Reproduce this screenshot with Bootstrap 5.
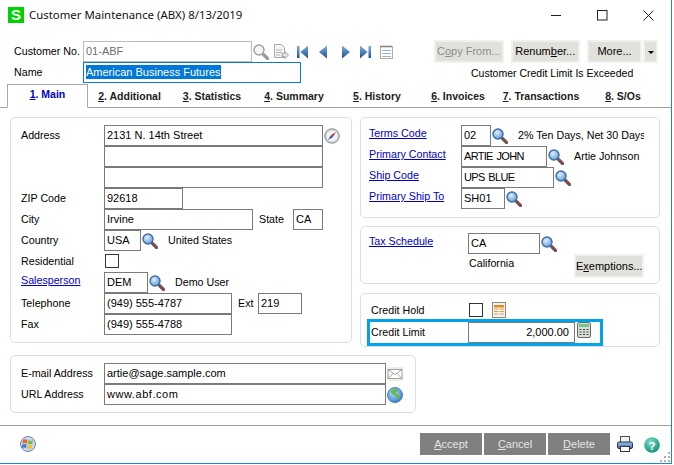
<!DOCTYPE html>
<html lang="en">
<head>
<meta charset="utf-8">
<title>Customer Maintenance</title>
<link href="https://cdn.jsdelivr.net/npm/bootstrap@5.3.0/dist/css/bootstrap.min.css" rel="stylesheet">
<style>
html,body{margin:0;padding:0;background:#fff}
body{font-family:"Liberation Sans",Arial,sans-serif;font-size:10.7px;line-height:1;color:#000;overflow:hidden}
.win{position:relative;width:672px;height:464px;background:#fff;border-right:1px solid #1a84d8;border-bottom:1px solid #1a84d8;overflow:hidden}
.titlebar{height:30px;padding-left:8px}
.sicon{width:16px;height:16px;background:#00d200;color:#fff;font-weight:700;font-size:15px;line-height:16px;text-align:center;margin-top:-1px}
.ttl{font-family:"Noto Sans","Open Sans",sans-serif;font-size:11.4px;margin-left:5px;color:#111}
.wctl{margin-left:auto;width:120px;padding-right:17px}
.hdr{height:54px;padding:10px 0 0 14px}
.hdr-left{width:420px;padding-top:1px}
.hdr-right{width:224px}
.rowf{height:21px}
.lbl-h{width:69px}
.fld{display:block;height:21px;padding:3px 2px 0 2px;border:1px solid #7a7a7a;border-radius:0;background:#fff;font-size:11px;line-height:13px;color:#000;white-space:nowrap;overflow:hidden;box-shadow:none;min-height:0;flex:none}
.fld.dim{border-color:#bdbdbd;color:#6e6e6e}
.fld.sel{border-color:#0f78c8}
.selt{background:#0078d7;color:#fff;padding:1px 0}
.caps{letter-spacing:-.7px;word-spacing:1.5px}
.wide{letter-spacing:.55px}
.w30{width:30px}.w37{width:37px}.w44{width:44px}.w72{width:72px}.w79{width:79px}.w86{width:86px}.w93{width:93px}.w107{width:107px}.w128{width:128px}.w149{width:149px}.w169{width:169px}.w218{width:218px}.w219{width:219px}.w282{width:282px}
.mbtn{height:23px;padding:0;border:2px solid #f0f0ec;border-radius:0;background:#e1e1dc;color:#000;font-size:11px;line-height:19px}
.mbtn.off{color:#8c8c8c;background:#e1e1dc}
.b70{width:70px}.b54{width:55px}.b15{width:15px;margin-left:1px}
.gapr{gap:7px}
.msg{padding:5px 0 0 37px;font-size:10.5px}
.arrow{display:inline-block;width:0;height:0;border-left:3px solid transparent;border-right:3px solid transparent;border-top:3px solid #000;vertical-align:middle}
.tabs{height:24px;padding-left:7px;border-bottom:1px solid #a0a0a0;flex-wrap:nowrap;--bs-nav-tabs-border-width:0}
.tabs .nav-link{height:23px;padding:7px 0 0;border:0;border-radius:0;font-size:10.5px;font-weight:700;color:#1c1c1c;text-align:center;background:transparent}
.tabs .nav-link.active{height:24px;padding-top:4px;border:1px solid #a8a8a8;border-bottom:1px solid #fff;background:#fff;color:#0000c8}
.t1{width:81px}.t2{width:83px}.t3{width:82px}.t4{width:82px}.t5{width:84px}.t6{width:78px}.t7{width:88px}.t8{width:76px}
.main{padding:9px 0 0 10px}
.topz{height:230px;gap:8px}
.pnl{border:1px solid #d7e0e8;border-radius:5px;background:#fff}
.pl{width:342px;height:226px;padding:7px 0 0 10px}
.pr{width:300px}
.p1{height:101px;padding:7px 0 0 8px}
.p2{height:58px;margin-top:8px;padding:6px 0 0 8px}
.p3{height:54px;margin-top:9px;padding:8px 0 0 6px}
.lw83{width:83px;flex:none}.lw92{width:92px;flex:none}.lw99{width:99px;flex:none}
a.lnk{display:inline-block;color:#0000c8;text-decoration:underline;padding-bottom:4px}
.ic{display:block;width:16px;height:16px;margin-left:1px;flex:none}
.ic2{margin-left:10px}
.clip{width:126px;overflow:hidden;white-space:nowrap}
.stl{width:40px;padding-left:6px}
.extl{width:26px;padding-left:6px}
.chk{width:14px;height:14px;border:1px solid #333;background:#fff;margin-left:1px;margin-top:-1px;flex:none}
.holdrow{height:16px;padding-left:4px}
.holdl{width:97px}
.hl{width:236px;height:27px;margin-top:1px;border:3px solid #00a2e8;padding-left:1px;align-items:flex-start}
.hl .lbl2{width:97px;line-height:20px;flex:none}
.hl .fld{height:21px;text-align:right;padding-right:5px}
.calcic{margin-left:2px}
.em{width:406px;height:58px;margin-top:8px;padding:7px 0 0 10px}
.divl{height:1px;background:#a0a0a0;margin-top:12px;margin-left:-10px;width:672px}
.foot{height:38px;padding:7px 0 0 20px}
.orb{margin-top:3px}
.fbtn{width:62px;height:22px;padding:0;border:0;border-radius:0;background:#808080;color:#e4e4e4;font-size:11px;line-height:22px;margin-left:2px}
.fbtn:first-child{margin-left:0}
.fbtn:hover{background:#808080;color:#e4e4e4}
.fbs{margin-left:384px}
.grip{position:absolute;right:1px;bottom:1px;width:11px;height:11px}
.tx{white-space:nowrap}
.calif{width:106px;padding:4px 0 0 1px}
.exm{width:70px;height:24px}
.p2row{height:26px}
.prn{margin-left:7px;margin-top:3px}
.hlp{margin-left:11px;margin-top:4px}
.n1{margin-left:8px}.n2{margin-left:11px}.n3{margin-left:15px}.n4{margin-left:10px}.n5{margin-left:9px}
</style>
</head>
<body>
<svg width="0" height="0" class="d-block" aria-hidden="true">
<defs>
<radialGradient id="gl" cx="40%" cy="35%" r="70%"><stop offset="0" stop-color="#e4f0fb"/><stop offset="1" stop-color="#5b97d2"/></radialGradient>
<radialGradient id="gb" cx="40%" cy="35%" r="70%"><stop offset="0" stop-color="#bfe0fa"/><stop offset="1" stop-color="#2f7fd0"/></radialGradient>
<radialGradient id="gh" cx="40%" cy="30%" r="75%"><stop offset="0" stop-color="#7fdcc4"/><stop offset="1" stop-color="#0f8f78"/></radialGradient>
<linearGradient id="nv" x1="0" y1="0" x2="0" y2="1"><stop offset="0" stop-color="#7fb0e0"/><stop offset="1" stop-color="#1f4f96"/></linearGradient>
<linearGradient id="pr" x1="0" y1="0" x2="0" y2="1"><stop offset="0" stop-color="#9cc0e8"/><stop offset="1" stop-color="#3d6fb0"/></linearGradient>
<symbol id="mag" viewBox="0 0 16 16"><path d="M10.500 10.500l4 4" stroke="#7a4f4f" stroke-width="3.200" stroke-linecap="round"/><circle cx="6" cy="6" r="5" fill="url(#gl)" stroke="#3a6ea8" stroke-width="1.400"/></symbol>
<symbol id="magg" viewBox="0 0 16 16"><path d="M10.500 10.500l4 4" stroke="#9a9a9a" stroke-width="3.200" stroke-linecap="round"/><circle cx="6" cy="6" r="5" fill="#f4f4f4" stroke="#a0a0a0" stroke-width="1.400"/></symbol>
</defs>
</svg>
<div class="win">
  <div class="titlebar d-flex align-items-center">
    <div class="sicon">S</div>
    <div class="ttl">Customer Maintenance (ABX) 8/13/2019</div>
    <div class="wctl d-flex justify-content-between align-items-center">
      <svg width="11" height="11" viewBox="0 0 11 11"><path d="M0 5.500h10" stroke="#222" fill="none"/></svg>
      <svg width="11" height="11" viewBox="0 0 11 11"><rect x=".5" y=".5" width="9.500" height="9.500" stroke="#222" fill="none"/></svg>
      <svg width="11" height="11" viewBox="0 0 11 11"><path d="M.5.5l10 10M10.500.5l-10 10" stroke="#222" fill="none"/></svg>
    </div>
  </div>
  <div class="hdr d-flex">
    <div class="hdr-left">
      <div class="rowf d-flex align-items-center">
        <div class="lbl-h tx">Customer No.</div>
        <div class="fld dim w169">01-ABF</div>
        <svg class="ic" viewBox="0 0 16 16"><use href="#magg"/></svg>
        <svg class="ic ms-1" viewBox="0 0 16 16"><path d="M1.500.5h7l3 3v10h-10z" fill="#f4f4f4" stroke="#a8a8a8"/><path d="M3 6h6M3 8.500h6M3 11h4" stroke="#b5b5b5"/><path d="M9 9.500h3v-2l3.500 3.500-3.500 3.500v-2H9z" fill="#e4e4e4" stroke="#a8a8a8"/></svg>
        <svg class="d-block n1" width="11" height="16" viewBox="0 0 11 16"><rect x="0" y="2" width="2.500" height="12" fill="url(#nv)"/><path d="M11 1.500v13L3.500 8z" fill="url(#nv)"/></svg>
        <svg class="d-block n2" width="8" height="16" viewBox="0 0 8 16"><path d="M8 1.500v13L0 8z" fill="url(#nv)"/></svg>
        <svg class="d-block n3" width="8" height="16" viewBox="0 0 8 16"><path d="M0 1.500v13L8 8z" fill="url(#nv)"/></svg>
        <svg class="d-block n4" width="11" height="16" viewBox="0 0 11 16"><path d="M0 1.500v13L7.500 8z" fill="url(#nv)"/><rect x="8.500" y="2" width="2.500" height="12" fill="url(#nv)"/></svg>
        <svg class="d-block n5" width="13" height="16" viewBox="0 0 13 16"><rect x=".5" y="2.500" width="12" height="12" fill="#fff" stroke="#b5a99a"/><path d="M1 1.500v2M3 1.500v2M5 1.500v2M7 1.500v2M9 1.500v2M11 1.500v2" stroke="#666"/><path d="M2 6.500h9M2 9.500h9M2 12.500h9" stroke="#8fb4e0"/></svg>
      </div>
      <div class="rowf d-flex align-items-center">
        <div class="lbl-h tx">Name</div>
        <div class="fld sel w218"><span class="selt">American Business Futures</span></div>
      </div>
    </div>
    <div class="hdr-right">
      <div class="d-flex gapr">
        <button type="button" class="btn mbtn off b70">C<u>o</u>py From...</button>
        <button type="button" class="btn mbtn b70">Renum<u>b</u>er...</button>
        <div class="d-flex">
          <button type="button" class="btn mbtn b54">More...</button>
          <button type="button" class="btn mbtn b15"><span class="arrow"></span></button>
        </div>
      </div>
      <div class="msg tx">Customer Credit Limit Is Exceeded</div>
    </div>
  </div>
  <ul class="nav nav-tabs tabs">
    <li class="nav-item t1"><a class="nav-link active w-100" href="#"><u>1</u>. Main</a></li>
    <li class="nav-item t2"><a class="nav-link w-100" href="#"><u>2</u>. Additional</a></li>
    <li class="nav-item t3"><a class="nav-link w-100" href="#"><u>3</u>. Statistics</a></li>
    <li class="nav-item t4"><a class="nav-link w-100" href="#"><u>4</u>. Summary</a></li>
    <li class="nav-item t5"><a class="nav-link w-100" href="#"><u>5</u>. History</a></li>
    <li class="nav-item t6"><a class="nav-link w-100" href="#"><u>6</u>. Invoices</a></li>
    <li class="nav-item t7"><a class="nav-link w-100" href="#"><u>7</u>. Transactions</a></li>
    <li class="nav-item t8"><a class="nav-link w-100" href="#"><u>8</u>. S/Os</a></li>
  </ul>
  <div class="main">
    <div class="topz d-flex">
      <div class="pnl pl">
        <div class="rowf d-flex align-items-center"><div class="lw83">Address</div><div class="fld w219">2131 N. 14th Street</div>
          <svg class="ic" viewBox="0 0 16 16"><circle cx="8" cy="8" r="7.300" fill="#c9ccd0" stroke="#7f7f7f" stroke-width=".8"/><circle cx="8" cy="8" r="5.500" fill="#eef3fa"/><path d="M12 4L9 9 7 7z" fill="#d83a2c"/><path d="M4 12l3-5 2 2z" fill="#2c55b8"/></svg></div>
        <div class="rowf d-flex align-items-center"><div class="lw83"></div><div class="fld w219"></div></div>
        <div class="rowf d-flex align-items-center"><div class="lw83"></div><div class="fld w219"></div></div>
        <div class="rowf d-flex align-items-center"><div class="lw83">ZIP Code</div><div class="fld w79">92618</div></div>
        <div class="rowf d-flex align-items-center"><div class="lw83">City</div><div class="fld w149">Irvine</div><div class="stl">State</div><div class="fld w30">CA</div></div>
        <div class="rowf d-flex align-items-center"><div class="lw83">Country</div><div class="fld w37">USA</div><svg class="ic" viewBox="0 0 16 16"><use href="#mag"/></svg><div class="ic2 tx">United States</div></div>
        <div class="rowf d-flex align-items-center"><div class="lw83">Residential</div><div class="chk"></div></div>
        <div class="rowf d-flex align-items-center"><div class="lw83"><a class="lnk" href="#">Salesperson</a></div><div class="fld w44">DEM</div><svg class="ic" viewBox="0 0 16 16"><use href="#mag"/></svg><div class="ic2 tx">Demo User</div></div>
        <div class="rowf d-flex align-items-center"><div class="lw83">Telephone</div><div class="fld w128">(949) 555-4787</div><div class="extl">Ext</div><div class="fld w44">219</div></div>
        <div class="rowf d-flex align-items-center"><div class="lw83">Fax</div><div class="fld w128">(949) 555-4788</div></div>
      </div>
      <div class="pr">
        <div class="pnl p1">
          <div class="rowf d-flex align-items-center"><div class="lw92"><a class="lnk" href="#">Terms Code</a></div><div class="fld w30">02</div><svg class="ic" viewBox="0 0 16 16"><use href="#mag"/></svg><div class="ic2 clip">2% Ten Days, Net 30 Days</div></div>
          <div class="rowf d-flex align-items-center"><div class="lw92"><a class="lnk" href="#">Primary Contact</a></div><div class="fld caps w86">ARTIE JOHN</div><svg class="ic" viewBox="0 0 16 16"><use href="#mag"/></svg><div class="ic2 tx">Artie Johnson</div></div>
          <div class="rowf d-flex align-items-center"><div class="lw92"><a class="lnk" href="#">Ship Code</a></div><div class="fld caps w93">UPS BLUE</div><svg class="ic" viewBox="0 0 16 16"><use href="#mag"/></svg></div>
          <div class="rowf d-flex align-items-center"><div class="lw92"><a class="lnk" href="#">Primary Ship To</a></div><div class="fld w44">SH01</div><svg class="ic" viewBox="0 0 16 16"><use href="#mag"/></svg></div>
        </div>
        <div class="pnl p2">
          <div class="rowf d-flex align-items-center"><div class="lw99"><a class="lnk" href="#">Tax Schedule</a></div><div class="fld w72">CA</div><svg class="ic" viewBox="0 0 16 16"><use href="#mag"/></svg></div>
          <div class="d-flex p2row">
            <div class="lw99"></div>
            <div class="tx calif">California</div>
            <button type="button" class="btn mbtn exm">E<u>x</u>emptions...</button>
          </div>
        </div>
        <div class="pnl p3">
          <div class="holdrow d-flex align-items-center"><div class="holdl">Credit Hold</div><div class="chk"></div>
            <svg class="d-block ms-2" width="16" height="16" viewBox="0 0 16 16"><rect x="1.500" y=".5" width="13" height="15" fill="#fff3df" stroke="#8a8a8a"/><rect x="3" y="3" width="10" height="2.500" fill="#e08a2c"/><path d="M3 7h10M3 9.500h10M3 12h10" stroke="#d8a060"/><path d="M8 6v7" stroke="#fff"/></svg></div>
          <div class="hl d-flex">
            <div class="lbl2 tx">Credit Limit</div>
            <div class="fld w107">2,000.00</div>
            <svg class="d-block calcic" width="14" height="16" viewBox="0 0 14 16"><rect x=".5" y=".5" width="13" height="15" rx="1.500" fill="#d9ddd6" stroke="#5f6f63"/><rect x="2" y="2" width="10" height="3" fill="#73c489"/><path d="M2.500 7.500h2M6 7.500h2M9.500 7.500h2M2.500 10h2M6 10h2M9.500 10h2M2.500 12.500h2M6 12.500h2M9.500 12.500h2" stroke="#4c4c4c" stroke-width="1.200"/></svg>
          </div>
        </div>
      </div>
    </div>
    <div class="pnl em">
      <div class="rowf d-flex align-items-center"><div class="lw83">E-mail Address</div><div class="fld w282">artie@sage.sample.com</div>
        <svg class="ic" viewBox="0 0 16 16"><rect width="16" height="14" y="1" fill="#f1efe3"/><rect x="1" y="3.500" width="14" height="9" fill="#fff" stroke="#8a8a8a" stroke-width=".8"/><path d="M1 3.500l7 5 7-5M1 12.500l5-5M15 12.500l-5-5" fill="none" stroke="#8a8a8a" stroke-width=".8"/></svg></div>
      <div class="rowf d-flex align-items-center"><div class="lw83">URL Address</div><div class="fld wide w282">www.abf.com</div>
        <svg class="ic" viewBox="0 0 16 16"><circle cx="8" cy="8" r="7.500" fill="url(#gb)" stroke="#2a62a8" stroke-width=".8"/><path d="M5 2.500c2-1 5-.5 6 .5.500 2-2 2-2 3.500s3 1 4 2c-.5 2-2 3.500-3 4-1-1-.5-3-2-4s-3-1-4-3S4 4 5 2.500z" fill="#6cb84e"/></svg></div>
    </div>
    <div class="divl"></div>
  </div>
  <div class="foot d-flex">
    <svg class="d-block orb" width="16" height="16" viewBox="0 0 16 16"><circle cx="8" cy="8" r="7.500" fill="#c9d8ee" stroke="#6a86b8"/><path d="M3 4c1.500-1 3-1 4.500 0l-.7 3.500C5.300 6.800 3.800 6.800 2.300 7.500z" fill="#e8642c"/><path d="M8.500 4.300c1.500.8 3 .8 4.500 0l-.7 3.500c-1.500.7-3 .7-4.500 0z" fill="#7cb82c"/><path d="M2.200 8.500c1.500-.7 3-.7 4.500 0l-.7 3.500c-1.500-.7-3-.7-4.500 0z" fill="#3a7fd8"/><path d="M7.700 8.800c1.500.7 3 .7 4.500 0l-.7 3.500c-1.500.7-3 .7-4.500 0z" fill="#f4c020"/></svg>
    <div class="fbs d-flex">
      <button type="button" class="btn fbtn"><u>A</u>ccept</button>
      <button type="button" class="btn fbtn"><u>C</u>ancel</button>
      <button type="button" class="btn fbtn"><u>D</u>elete</button>
    </div>
    <svg class="d-block prn" width="16" height="16" viewBox="0 0 16 16"><rect x="3.500" y=".5" width="9" height="6" fill="#eef0f2" stroke="#4a4f58"/><rect x=".5" y="6" width="15" height="6.500" rx="1.500" fill="url(#pr)" stroke="#25354f"/><rect x="3.500" y="10.500" width="9" height="5" fill="#fff" stroke="#30343c"/></svg>
    <svg class="d-block hlp" width="16" height="16" viewBox="0 0 16 16"><circle cx="8" cy="8" r="7.800" fill="url(#gh)"/><text x="8" y="12.500" text-anchor="middle" font-family="Liberation Sans" font-weight="700" font-size="11.500" fill="#fff">?</text></svg>
  </div>
  <svg class="grip" viewBox="0 0 11 11"><path d="M9 1h2v2H9zM5 5h2v2H5zM9 5h2v2H9zM1 9h2v2H1zM5 9h2v2H5zM9 9h2v2H9z" fill="#b0b0b0"/></svg>
</div>
</body>
</html>
